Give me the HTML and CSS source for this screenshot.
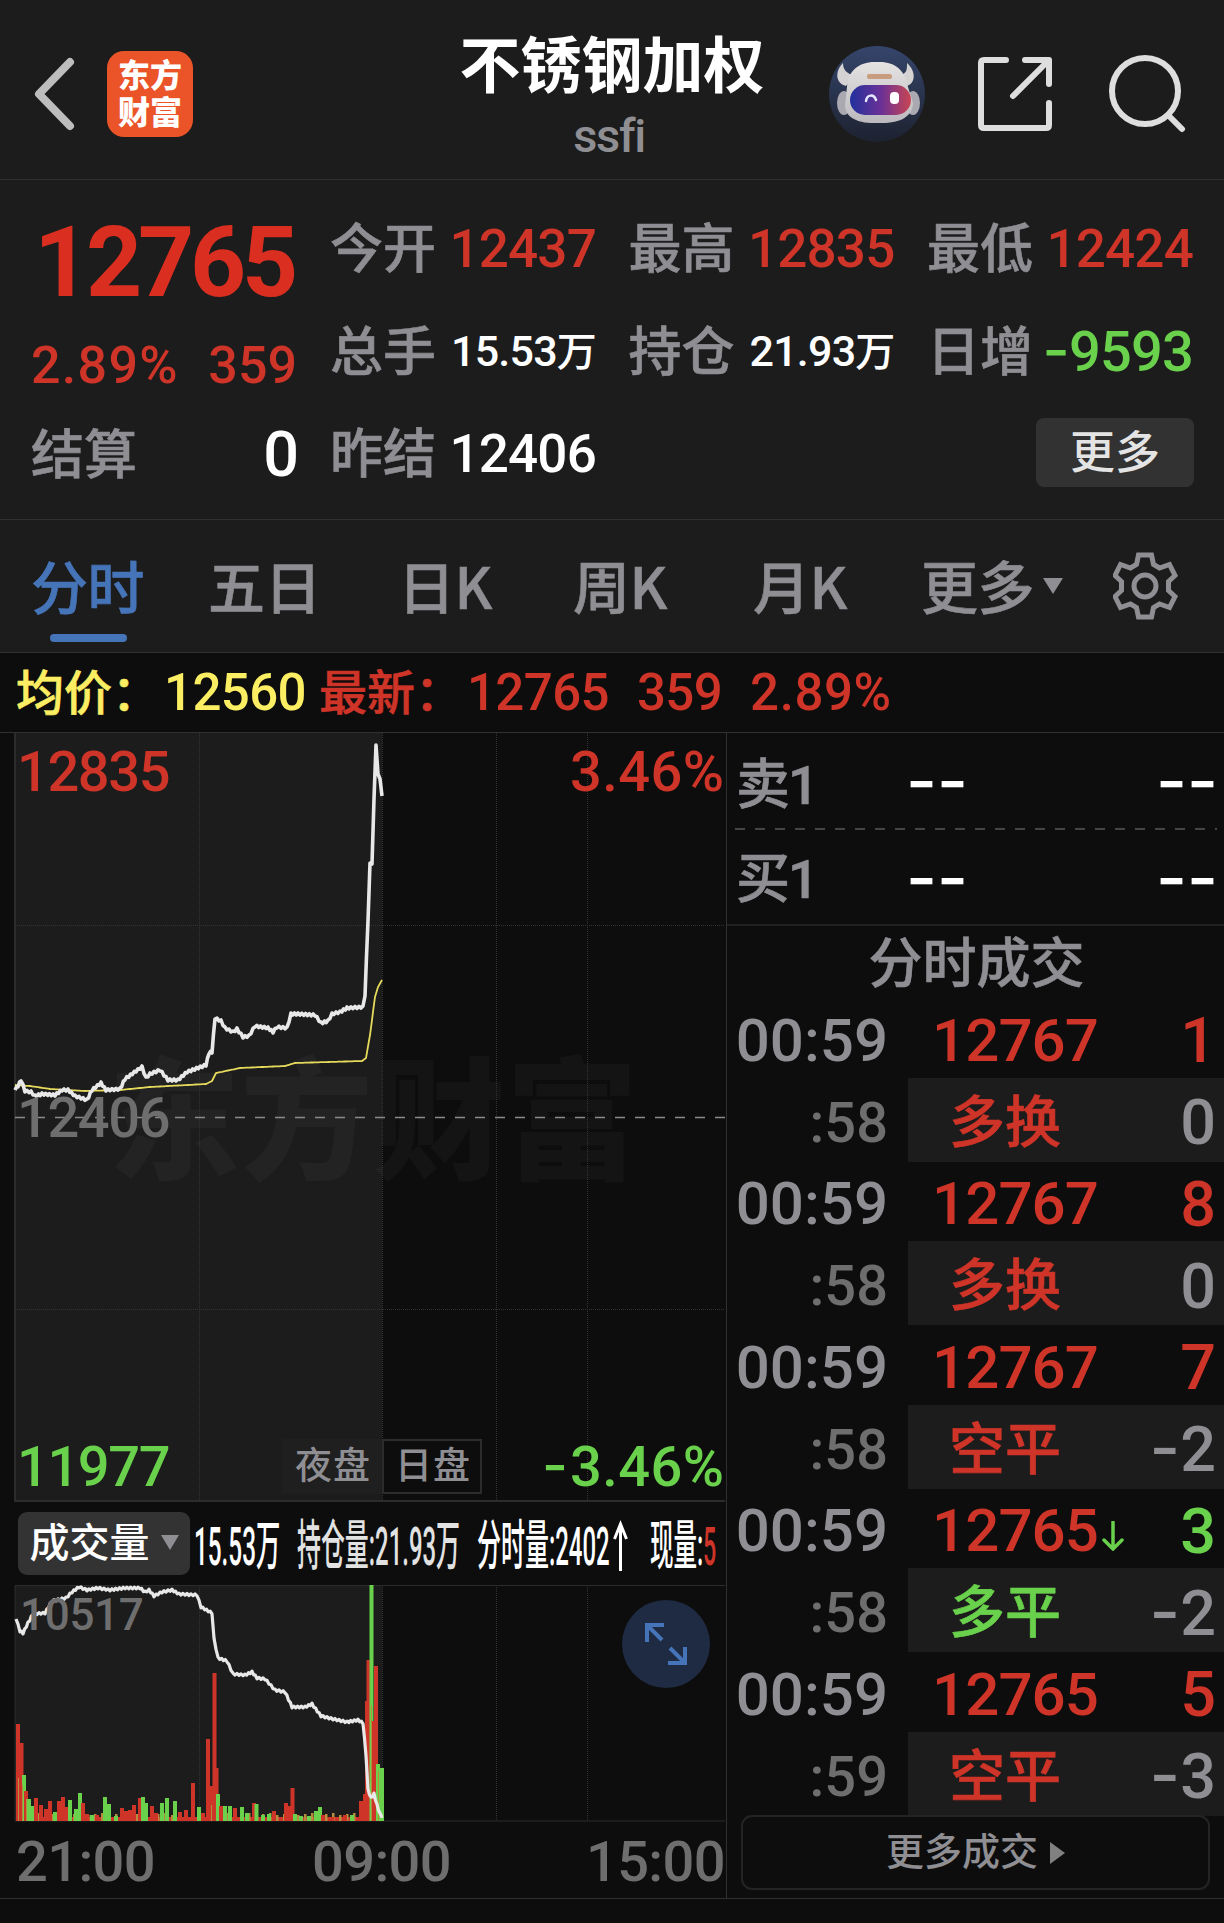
FILE: index.html
```html
<!DOCTYPE html>
<html lang="zh-CN">
<head>
    <meta charset="UTF-8">
    <meta name="viewport" content="width=device-width, initial-scale=1.0">
    <title>不锈钢加权 ssfi</title>
    <link rel="stylesheet" href="styles.css">
</head>
<body>
    <header class="topbar">
        <svg class="back" width="44" height="74" viewBox="0 0 44 74"><path d="M37 5 L6 37 L37 69"/></svg>
        <div class="logo"><span>东方</span><span>财富</span></div>
        <div class="title">
            <h1>不锈钢加权</h1>
            <p>ssfi</p>
        </div>
        <div class="top-icons">
            <svg width="96" height="96" viewBox="0 0 96 96">
                <defs>
                    <linearGradient id="sky" x1="0" y1="0" x2="0" y2="1"><stop offset="0" stop-color="#35456b"/><stop offset="1" stop-color="#1d2230"/></linearGradient>
                    <linearGradient id="visor" x1="0" y1="0" x2="1" y2="0"><stop offset="0" stop-color="#22309c"/><stop offset=".5" stop-color="#693197"/><stop offset="1" stop-color="#c94552"/></linearGradient>
                    <linearGradient id="helmet" x1="0" y1="0" x2="0" y2="1"><stop offset="0" stop-color="#e6e3e3"/><stop offset="1" stop-color="#bcb9be"/></linearGradient>
                </defs>
                <circle cx="48" cy="48" r="48" fill="url(#sky)"/>
                <path d="M14 17 C6 25 6 37 17 40 L25 29 C18 28 14 24 14 17 Z M78 17 C87 25 87 37 78 40 L70 29 C78 28 78 24 78 17 Z" fill="#d5d2d4"/>
                <ellipse cx="15" cy="57" rx="7" ry="12" fill="#aaa8b0"/>
                <ellipse cx="84" cy="57" rx="7" ry="12" fill="#aaa8b0"/>
                <path d="M18 41 C19 24 31 15 48 16 C66 15 76 24 79 41 L84 57 C84 71 70 78 49 77 C28 78 16 71 16 59 Z" fill="url(#helmet)"/>
                <rect x="38" y="28" width="25" height="5" rx="2" fill="#c79d7d"/>
                <rect x="21" y="39" width="61" height="30" rx="15" fill="url(#visor)"/>
                <path d="M37 55 C38 48 45 48 47 54" fill="none" stroke="#e5e8ff" stroke-width="2.5" stroke-linecap="round"/>
                <rect x="61" y="46" width="9" height="12" rx="4" fill="#fff"/>
            </svg>
            <svg class="line-icon" width="76" height="76" viewBox="0 0 76 76"><path d="M29 4 H7 Q4 4 4 7 V69 Q4 72 7 72 H69 Q72 72 72 69 V47 M48 4 H72 V28 M71 5 L36 40"/></svg>
            <svg class="line-icon" width="78" height="78" viewBox="0 0 78 78"><circle cx="37" cy="36" r="33"/><path d="M60 60 L74 74"/></svg>
        </div>
    </header>

    <section class="quote">
        <div class="quote-main">
            <div class="last red">12765</div>
            <div class="change red"><span>2.89%</span><span>359</span></div>
            <div class="settle"><label>结算</label><b>0</b></div>
        </div>
        <div class="quote-grid">
            <div><label>今开</label><b class="red">12437</b></div>
            <div><label>最高</label><b class="red">12835</b></div>
            <div><label>最低</label><b class="red">12424</b></div>
            <div><label>总手</label><b class="small">15.53<i>万</i></b></div>
            <div><label>持仓</label><b class="small">21.93<i>万</i></b></div>
            <div><label>日增</label><b class="green big"><s class="dash">-</s>9593</b></div>
            <div><label>昨结</label><b>12406</b></div>
            <button class="more">更多</button>
        </div>
    </section>

    <nav class="tabs">
        <a class="active">分时</a>
        <a>五日</a>
        <a>日K</a>
        <a>周K</a>
        <a>月K</a>
        <a class="drop">更多</a>
        <svg class="gear" width="66" height="68" viewBox="-32 -34 66 68">
            <path d="M-6.5 -31 H6.5 L8.5 -21.5 L14.5 -18 L24.5 -21.5 L30 -10.5 L23.5 -4.5 V4.5 L30 10.5 L24.5 21.5 L14.5 18 L8.5 21.5 L6.5 31 H-6.5 L-8.5 21.5 L-14.5 18 L-24.5 21.5 L-30 10.5 L-23.5 4.5 V-4.5 L-30 -10.5 L-24.5 -21.5 L-14.5 -18 L-8.5 -21.5 Z"/>
            <circle r="11"/>
        </svg>
    </nav>

    <div class="average">
        <span class="yellow"><em>均价：</em>12560</span>
        <span class="red"><em>最新：</em>12765</span>
        <span class="red">359</span>
        <span class="red wide">2.89%</span>
    </div>

    <main class="board">
        <section class="charts">
            <svg class="price-chart" width="726" height="769" viewBox="0 733 726 769">
                <rect class="night" x="15" y="733" width="367" height="768"/>
                <text class="watermark" x="108" y="1169" textLength="530">东方财富</text>
                <path class="grid" d="M199.5 733 V1500 M382.5 733 V1500 M496.5 733 V1500 M587.5 733 V1500 M15 925.5 H725 M15 1309.5 H725"/>
                <path class="frame" d="M15 733 V1501 H725"/>
                <path class="base-line" d="M15 1117.5 H725"/>
                <path id="avgLine" class="avg-line"/>
                <path id="priceLine" class="price-line"/>
                <text class="mark red" x="17" y="791">12835</text>
                <text class="mark red wide" x="570" y="791">3.46%</text>
                <text class="mark gray" x="17" y="1137">12406</text>
                <text class="mark green" x="17" y="1486">11977</text>
                <text class="mark green wide" x="570" y="1486">3.46%</text>
                <text class="mark green hyphen" x="542" y="1485">-</text>
                <rect class="session-bg" x="282" y="1439" width="100" height="55"/>
                <rect class="session-box" x="383" y="1440" width="98" height="53"/>
                <text class="session" x="295" y="1479" textLength="75">夜盘</text>
                <text class="session" x="395" y="1479" textLength="75">日盘</text>
            </svg>

            <div class="volume-bar">
                <button class="picker">成交量</button>
                <svg class="figures" width="536" height="80" viewBox="190 1502 536 80">
                    <text transform="translate(194 1564) scale(.45 1)">15.53万</text>
                    <text transform="translate(297 1564) scale(.443 1)" class="soft">持仓量:21.93万</text>
                    <text transform="translate(477 1564) scale(.444 1)">分时量:2402</text>
                    <path d="M620.5 1570 V1524 M614.5 1538 L620.5 1523 L626.5 1538"/>
                    <text transform="translate(650 1564) scale(.435 1)">现量:</text>
                    <text transform="translate(703 1564) scale(.43 1)" class="red">5</text>
                </svg>
            </div>

            <svg class="volume-chart" width="726" height="238" viewBox="0 1584 726 238">
                <rect class="night" x="15" y="1585" width="367" height="236"/>
                <path class="grid" d="M199.5 1585 V1821 M382.5 1585 V1821 M496.5 1585 V1821 M587.5 1585 V1821"/>
                <path class="frame thin" d="M15 1585.5 V1821 H725 M15 1585.5 H725"/>
                <g id="bars"></g>
                <path id="holdLine" class="hold-line"/>
                <text class="mark gray small" x="20" y="1630">10517</text>
                <circle cx="666" cy="1644" r="44" fill="#1e2b42"/>
                <path class="expand" d="M647 1642 V1625 H664 M648 1626 L662 1640 M685 1647 V1663 H668 M684 1662 L670 1648"/>
            </svg>

            <div class="times"><span>21:00</span><span>09:00</span><span>15:00</span></div>
        </section>

        <aside class="side">
            <div class="level"><label>卖1</label><b>--</b><b>--</b></div>
            <svg class="split" width="482" height="2"><path d="M0 1 H482"/></svg>
            <div class="level second"><label>买1</label><b>--</b><b>--</b></div>
            <h2>分时成交</h2>
            <div id="trades"></div>
            <button class="all-trades">更多成交</button>
        </aside>
    </main>

    <script>
        const trades = [
            { price: '12767', qty: '1', color: 'red', sec: ':58', type: '多换', typeColor: 'red', diff: 0 },
            { price: '12767', qty: '8', color: 'red', sec: ':58', type: '多换', typeColor: 'red', diff: 0 },
            { price: '12767', qty: '7', color: 'red', sec: ':58', type: '空平', typeColor: 'red', diff: -2 },
            { price: '12765', qty: '3', color: 'green', sec: ':58', type: '多平', typeColor: 'green', diff: -2, down: true },
            { price: '12765', qty: '5', color: 'red', sec: ':59', type: '空平', typeColor: 'red', diff: -3 }
        ];
        const arrow = '<svg class="down" width="22" height="30" viewBox="0 0 22 30"><path d="M11 1 V28 M2 19 L11 28 L20 19"/></svg>';

        document.getElementById('trades').innerHTML = trades.map(t => `
            <div class="trade">
                <span class="time">00:59</span>
                <span class="price red">${t.price}${t.down ? arrow : ''}</span>
                <span class="qty ${t.color}">${t.qty}</span>
            </div>
            <div class="trade detail">
                <span class="time">${t.sec}</span>
                <span class="type ${t.typeColor}">${t.type}</span>
                <span class="qty">${t.diff < 0 ? '<s class="dash">-</s>' : ''}${Math.abs(t.diff)}</span>
            </div>
        `).join('');

        // key points of each line; flat stretches get a small ripple
        const price = [[15,1090],[18,1086],[21,1080],[25,1091],[31,1092],[35,1096],[42,1094],[55,1095],[62,1090],[68,1090],[75,1096],[87,1100],[92,1090],[101,1083],[106,1090],[120,1089],[125,1079],[136,1071],[142,1067],[146,1078],[150,1074],[160,1070],[168,1080],[178,1080],[187,1072],[206,1065],[209,1053],[212,1052],[215,1018],[221,1021],[225,1028],[233,1032],[237,1029],[243,1037],[249,1036],[255,1026],[268,1028],[273,1032],[277,1027],[287,1028],[291,1014],[298,1014],[315,1015],[321,1023],[328,1021],[332,1014],[340,1012],[347,1008],[363,1007],[365,995],[368,920],[370,864],[372,863],[374,800],[376,744],[378,775],[380,778],[382,797]];
        const avg = [[15,1085],[30,1086],[50,1089],[85,1091],[120,1090],[150,1087],[206,1084],[212,1081],[216,1073],[240,1068],[285,1066],[295,1063],[362,1061],[366,1058],[370,1035],[375,997],[378,987],[382,980]];
        const hold = [[16,1619],[20,1631],[23,1633],[28,1623],[33,1614],[45,1613],[52,1601],[66,1598],[72,1592],[79,1587],[87,1590],[98,1588],[110,1590],[125,1588],[140,1588],[145,1592],[149,1590],[154,1596],[162,1592],[172,1590],[179,1594],[197,1595],[201,1607],[212,1613],[214,1639],[218,1658],[227,1661],[233,1674],[245,1675],[252,1672],[257,1678],[265,1679],[275,1690],[285,1692],[292,1707],[305,1707],[312,1704],[321,1716],[333,1719],[347,1722],[358,1720],[363,1723],[366,1755],[368,1790],[371,1798],[374,1794],[377,1805],[380,1814],[383,1817]];

        function linePath(points, ripple) {
            let d = 'M' + points[0].join(' ');
            let side = 1;
            for (let i = 1; i < points.length; i++) {
                const [x0, y0] = points[i - 1];
                const [x1, y1] = points[i];
                const steps = Math.max(1, Math.round((x1 - x0) / 2));
                for (let k = 1; k <= steps; k++) {
                    side = -side;
                    const y = y0 + (y1 - y0) * k / steps + side * ripple;
                    d += ` L${(x0 + (x1 - x0) * k / steps).toFixed(1)} ${y.toFixed(1)}`;
                }
            }
            return d;
        }
        document.getElementById('priceLine').setAttribute('d', linePath(price, 1));
        document.getElementById('avgLine').setAttribute('d', linePath(avg, 0));
        document.getElementById('holdLine').setAttribute('d', linePath(hold, 0.9));

        // [x, height, colour]
        const bars = [[18,97,'r'],[21.5,78,'r'],[24,46,'g'],[26,30,'r'],[29,22,'g'],[32,15,'g'],[36,23,'r'],[41,16,'r'],[46,12,'r'],[50,20,'r'],[55,9,'g'],[59,20,'r'],[63,24,'r'],[66,14,'r'],[70,21,'g'],[76,12,'g'],[80,28,'g'],[83,18,'r'],[87,7,'r'],[92,6,'g'],[97,6,'r'],[105,24,'g'],[109,17,'g'],[116,5,'g'],[122,13,'r'],[126,10,'r'],[130,11,'r'],[134,16,'r'],[140,23,'r'],[143,24,'g'],[146,18,'g'],[152,15,'r'],[156,8,'r'],[162,18,'g'],[167,23,'g'],[175,20,'g'],[180,9,'r'],[186,11,'r'],[193,38,'r'],[199,14,'g'],[203,8,'r'],[208,82,'r'],[212,35,'r'],[214.5,148,'r'],[216.5,53,'r'],[218,27,'g'],[221,15,'r'],[225,15,'g'],[230,15,'g'],[235,13,'r'],[242,14,'g'],[247,8,'g'],[254,18,'r'],[256.5,17,'g'],[263,6,'g'],[269,7,'g'],[274,10,'r'],[286,18,'r'],[290,15,'r'],[292.5,33,'r'],[295,7,'g'],[301,5,'g'],[309,5,'g'],[316,10,'g'],[320,14,'g'],[323,6,'r'],[332,4,'r'],[345,6,'r'],[352,6,'g'],[361,20,'r'],[365,27,'r'],[367,120,'r'],[368.5,161,'r'],[376,155,'r'],[371.5,236,'g'],[373.5,100,'r'],[378,57,'g'],[382,53,'g']];
        let shapes = '<rect class="r" x="16" y="1817" width="366" height="4"/>';
        for (let x = 24; x < 360; x += 7) {
            shapes += `<rect class="o" x="${x}" y="${1815 - x % 3}" width="2.5" height="${6 + x % 3}"/>`;
        }
        bars.forEach(([x, h, c]) => {
            shapes += `<rect class="${c}" x="${x - 2}" y="${1821 - h}" width="4" height="${h}"/>`;
        });
        for (const [x, h] of [[18, 43], [22, 36], [26, 22], [211, 16], [371, 116], [378, 50]]) {
            shapes += `<rect class="o" x="${x}" y="${1821 - h}" width="1" height="${h}"/>`;
        }
        document.getElementById('bars').innerHTML = shapes;
    </script>
</body>
</html>
```
FILE: styles.css
```css
* {
    box-sizing: border-box;
}

body {
    margin: 0;
    width: 1224px;
    height: 1923px;
    overflow: hidden;
    background: #0d0d0d;
    color: #fff;
    font-family: Roboto, "Noto Sans CJK SC", sans-serif;
    font-weight: 500;
    line-height: 1;
}

h1, h2, p {
    margin: 0;
    font-weight: 500;
}

button {
    border: none;
    padding: 0;
    color: inherit;
    font: inherit;
}

b, i, em, s {
    font-style: normal;
    font-weight: 500;
    text-decoration: none;
}

label, .tabs a, .side h2, .type, em {
    -webkit-text-stroke: 0.6px;
}

label, .gray {
    color: #8e8e93;
}

.red {
    color: #cf3428;
    fill: #cf3428;
}

.green {
    color: #69d14b;
    fill: #69d14b;
}

.yellow {
    color: #fbee63;
}

.dash {
    font-family: Inter, sans-serif;
    font-size: 1.05em;
    line-height: 0;
}

/* top bar */
.topbar {
    position: relative;
    display: flex;
    align-items: center;
    height: 180px;
    padding: 8px 38px 0 33px;
    background: #1c1c1c;
    border-bottom: 1px solid #303030;
}

.back {
    fill: none;
    stroke: #bdbdbd;
    stroke-width: 8;
    stroke-linecap: round;
    stroke-linejoin: round;
}

.logo {
    display: flex;
    flex-direction: column;
    align-items: center;
    justify-content: center;
    gap: 5px;
    width: 86px;
    height: 86px;
    margin-left: 30px;
    padding-top: 2px;
    border-radius: 17px;
    background: #ea5428;
    font-size: 32px;
}

.logo span {
    font-weight: 900;
    line-height: 32px;
}

.title {
    position: absolute;
    left: 0;
    right: 0;
    top: 35px;
    text-align: center;
}

.title h1 {
    font-size: 61px;
    line-height: 64px;
    font-weight: 700;
}

.title p {
    margin-top: 12px;
    padding-right: 6px;
    color: #8e8e93;
    font-size: 47px;
    line-height: 50px;
    letter-spacing: -1.3px;
}

.top-icons {
    display: flex;
    align-items: center;
    gap: 52px;
    margin-left: auto;
}

.line-icon {
    fill: none;
    stroke: #dedede;
    stroke-width: 6;
    stroke-linecap: round;
    stroke-linejoin: round;
}

.top-icons .line-icon + .line-icon {
    margin-left: 3px;
}

/* quote */
.quote {
    display: flex;
    gap: 34px;
    height: 340px;
    padding: 18px 31px 0 31px;
    background: #1c1c1c;
    border-bottom: 1px solid #303030;
}

.quote-main {
    width: 266px;
}

.quote-main > div {
    display: flex;
    justify-content: space-between;
    align-items: center;
}

.quote .last {
    height: 129px;
    padding-left: 3px;
    color: #da2f20;
    font-size: 98px;
    font-weight: 700;
    letter-spacing: -4.2px;
}

.quote .change {
    height: 77px;
    font-size: 52px;
}

.change span:first-child {
    letter-spacing: 1.3px;
}

.quote .settle {
    height: 101px;
}

.quote label {
    padding-top: 3px;
    margin-left: -1px;
    font-size: 53px;
}

.quote .settle label {
    margin-left: 0;
}

.settle b {
    margin-right: -2px;
    font-size: 63px;
}

.quote-grid {
    display: grid;
    grid-template-columns: repeat(3, 264px);
    grid-template-rows: repeat(3, 102.5px);
    column-gap: 34.5px;
}

.quote-grid div {
    display: flex;
    justify-content: space-between;
    align-items: center;
    white-space: nowrap;
}

.quote-grid b {
    margin-right: -1px;
    font-size: 53px;
    letter-spacing: -0.8px;
}

.quote-grid b.small {
    font-size: 43px;
}

.quote-grid b.big {
    font-size: 56px;
}

.small i {
    font-size: 40px;
}

.more {
    grid-column: 3;
    align-self: center;
    justify-self: end;
    width: 158px;
    height: 69px;
    margin: -4px -2px 0 0;
    padding-top: 2px;
    border-radius: 8px;
    background: #323232;
    color: #e4e4e4;
    font-size: 45px;
}

/* tabs */
.tabs {
    display: grid;
    grid-template-columns: 177px 190px 175px 180px 168px 192px 66px;
    align-items: center;
    height: 133px;
    padding-left: 31px;
    background: #1c1c1c;
    border-bottom: 1px solid #303030;
    color: #8e8e93;
    font-family: "Noto Sans CJK SC", sans-serif;
    font-size: 57px;
    letter-spacing: -0.5px;
}

.tabs a {
    margin-top: -3px;
}

.tabs .active {
    position: relative;
    color: #4674b8;
}

.active::after {
    content: "";
    position: absolute;
    left: 19px;
    top: 78px;
    width: 77px;
    height: 8px;
    border-radius: 4px;
    background: #4674b8;
}

.drop::after {
    content: "";
    display: inline-block;
    margin-left: 9px;
    border: 10px solid transparent;
    border-top: 16px solid #8e8e93;
    border-bottom: 0;
    vertical-align: 15px;
}

.gear {
    fill: none;
    stroke: #8e8e93;
    stroke-width: 5;
}

.average {
    display: flex;
    align-items: center;
    height: 80px;
    padding-left: 16px;
    border-bottom: 1px solid #303030;
    font-size: 51px;
    letter-spacing: -0.6px;
    white-space: nowrap;
}

.average em {
    margin-right: 4px;
    font-size: 48px;
    letter-spacing: 0;
}

.average span {
    margin-right: 28px;
}

.average .yellow {
    margin-right: 13px;
}

.average .wide {
    letter-spacing: 0.6px;
}

/* board */
.board {
    display: flex;
    height: 1166px;
    border-bottom: 1px solid #303030;
}

.charts {
    width: 727px;
    border-right: 1px solid #303030;
}

.charts svg {
    display: block;
}

.night {
    fill: #1c1c1c;
}

.watermark {
    fill: #fff;
    fill-opacity: 0.03;
    font-size: 132px;
    font-weight: 900;
}

.grid {
    fill: none;
    stroke: #333;
    stroke-dasharray: 1 1;
}

.frame {
    fill: none;
    stroke: #2c2c2c;
    stroke-width: 2;
}

.thin {
    stroke-width: 1;
}

.base-line {
    stroke: #8a8a8a;
    stroke-width: 1.5;
    stroke-dasharray: 10 10;
}

.price-line, .hold-line {
    fill: none;
    stroke: #e8e8e8;
    stroke-width: 3.6;
    stroke-linejoin: round;
}

.hold-line {
    stroke-width: 3.2;
}

.avg-line {
    fill: none;
    stroke: #e5da5c;
    stroke-width: 1.8;
}

.mark {
    font-size: 56px;
    letter-spacing: -1.4px;
}

.mark.wide {
    letter-spacing: 0.4px;
}

.mark.gray {
    fill: #6e6e6e;
}

.mark.small {
    font-size: 44px;
    letter-spacing: -0.3px;
}

.hyphen {
    font-family: Inter, sans-serif;
}

.session-bg {
    fill: #1f1f1f;
}

.session-box {
    fill: #0d0d0d;
    stroke: #2c2c2c;
    stroke-width: 2;
}

.session {
    fill: #8e8e93;
    font-size: 37px;
}

.volume-bar {
    display: flex;
    align-items: center;
    height: 82px;
    padding-left: 18px;
}

.picker {
    width: 172px;
    height: 63px;
    padding-top: 2px;
    border-radius: 9px;
    background: #333;
    color: #fff;
    font-size: 40px;
    white-space: nowrap;
}

.picker::after {
    content: "";
    display: inline-block;
    margin-left: 11px;
    border: 9px solid transparent;
    border-top: 15px solid #8e8e93;
    border-bottom: 0;
    vertical-align: 7px;
}

.figures {
    fill: #fff;
    font-size: 54px;
    -webkit-text-stroke: 0.8px;
}

.figures path {
    fill: none;
    stroke: #fff;
    stroke-width: 3;
}

.figures .soft {
    fill: #e2e2e2;
}

.figures .red {
    fill: #cf3428;
}

#bars .r {
    fill: #cf3428;
}

#bars .g {
    fill: #69d14b;
}

#bars .o {
    fill: #b58d3c;
}

.expand {
    fill: none;
    stroke: #4674b8;
    stroke-width: 4;
}

.times {
    display: flex;
    justify-content: space-between;
    padding: 12px 1px 0 16px;
    color: #6e6e6e;
    font-size: 56px;
    letter-spacing: -0.6px;
}

.times span:nth-child(2) {
    margin-left: 22px;
}

/* order book and trades */
.side {
    width: 497px;
}

.level {
    display: grid;
    grid-template-columns: 170px 1fr auto;
    align-items: center;
    height: 95px;
    padding: 8px 6px 0 9px;
    font-size: 54px;
}

.level label {
    padding-top: 2px;
    letter-spacing: -2px;
}

.level.second {
    height: 96px;
    padding-top: 4px;
    border-bottom: 2px solid #1f1f1f;
}

.level b {
    margin-top: -9px;
    font-family: Inter, sans-serif;
    font-size: 67px;
    font-weight: 500;
}

.level.second b {
    margin-top: -4px;
}

.split {
    display: block;
    margin-left: 8px;
    stroke: #444;
    stroke-width: 2;
    stroke-dasharray: 10 10;
}

.side h2 {
    height: 72px;
    padding: 12px 0 0 2px;
    color: #8e8e93;
    font-size: 54px;
    text-align: center;
}

.trade {
    display: grid;
    grid-template-columns: 182px 1fr auto;
    align-items: center;
    height: 79.5px;
    padding-top: 6px;
    color: #8e8e93;
    font-size: 60px;
}

.trade .time {
    padding-right: 21px;
    text-align: right;
}

.trade .price {
    padding-left: 23px;
    letter-spacing: -0.9px;
}

.trade .qty {
    padding-right: 8px;
    font-size: 63px;
}

.detail {
    height: 84px;
    background: linear-gradient(90deg, #0d0d0d 181px, #1c1c1c 181px);
}

.detail .time {
    color: #6e6e6e;
    font-size: 56px;
}

.detail .type {
    padding-left: 40px;
    font-size: 56px;
}

.down {
    margin-left: 4px;
    fill: none;
    stroke: #69d14b;
    stroke-width: 3.5;
    stroke-linecap: round;
}

.all-trades {
    display: block;
    width: 469px;
    height: 75px;
    margin: -1px 0 0 14px;
    border: 2px solid #242424;
    border-radius: 11px;
    background: none;
    color: #8e8e93;
    font-size: 38px;
}

.all-trades::after {
    content: "";
    display: inline-block;
    margin-left: 12px;
    border: 11px solid transparent;
    border-left: 15px solid #808080;
    border-right: 0;
    vertical-align: 1px;
}
```
